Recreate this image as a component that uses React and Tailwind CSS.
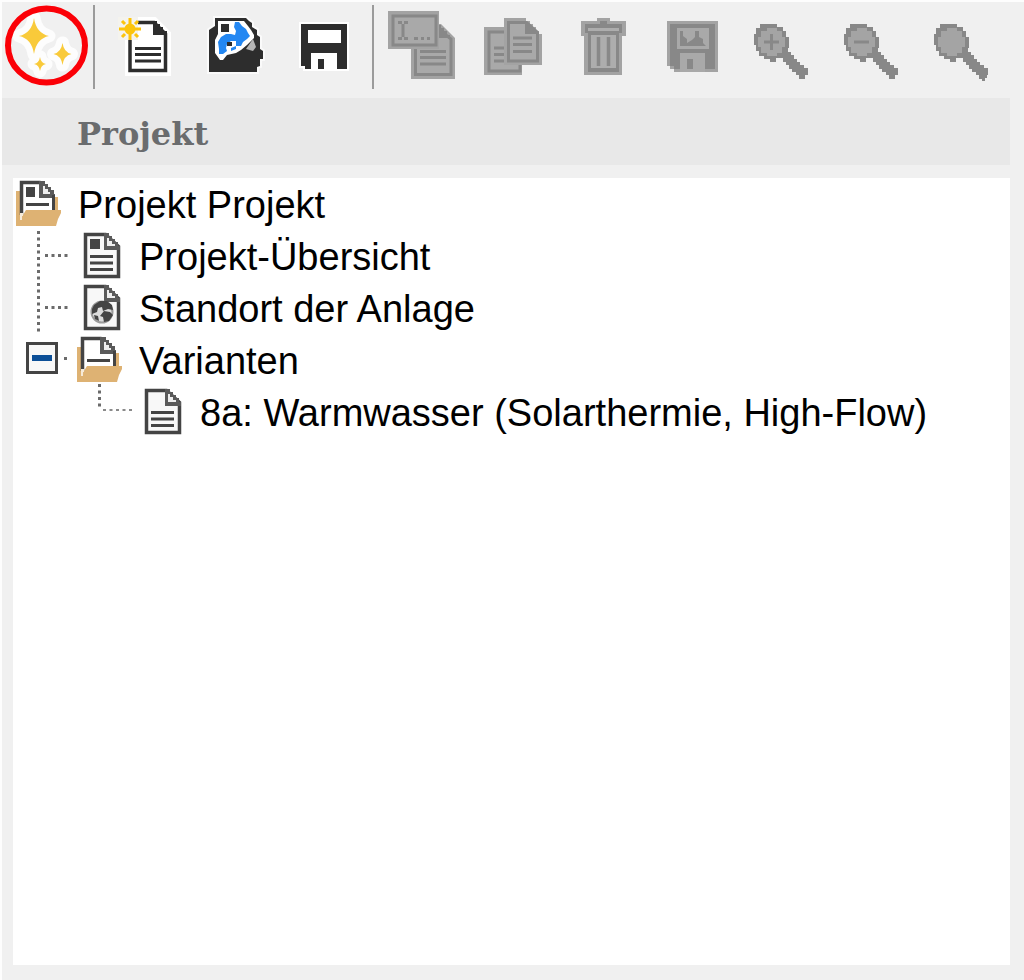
import { useState } from "react";

const DARK = "#2d2d2d";
const LINE = "#444444";
const MID = "#888888";
const PALE = "#a3a3a3";
const FACE = "#a9a9a9";

const spark = (x, y, rx, ry) =>
  `M${x} ${y - ry}Q${x + rx * 0.15} ${y - ry * 0.15} ${x + rx} ${y}Q${x + rx * 0.15} ${y + ry * 0.15} ${x} ${y + ry}Q${x - rx * 0.15} ${y + ry * 0.15} ${x - rx} ${y}Q${x - rx * 0.15} ${y - ry * 0.15} ${x} ${y - ry}Z`;

const SPARKS = [spark(34, 36, 15, 18), spark(62.5, 54, 9, 11), spark(40, 64, 6, 7)];

function SparkleIcon() {
  return (
    <svg className="h-24 w-[90px] shrink-0" viewBox="2 2 90 96" aria-hidden="true">
      <g fill="#fdfdfd" stroke="#fdfdfd" strokeWidth="13" strokeLinejoin="round">
        {SPARKS.map((d) => <path key={d} d={d} />)}
      </g>
      <g fill="#f9ca3a">
        {SPARKS.map((d) => <path key={d} d={d} />)}
      </g>
      <ellipse cx="46.5" cy="45.5" rx="38.5" ry="37" fill="none" stroke="#fb0007" strokeWidth="6" />
    </svg>
  );
}

function ToolIcon({ cx, children }) {
  return (
    <svg className="h-24 w-[76px]" viewBox={`${cx - 38} 2 76 96`} aria-hidden="true">
      {children}
    </svg>
  );
}

function NewIcon() {
  return (
    <ToolIcon cx={147}>
      <path d="M127 19h28l14 14v41h-42z" fill="#fff" stroke="#fff" strokeWidth="4" />
      <path d="M130 22.500h24l11.500 11.500v36.500h-35.500z" fill="#fff" stroke={DARK} strokeWidth="3.500" />
      <path d="M153 21h4v3h3v3h3v4h4v4h-14z" fill={DARK} />
      <path d="M135 48.500h26M135 54.500h26M135 61h26" stroke={DARK} strokeWidth="3" />
      <path d="M118 17h20v23h-20z" fill="#f4f3ee" />
      <circle cx="130" cy="29" r="5.500" fill="#fcc40c" />
      <path d="M130 18v22M119 29h22" stroke="#fcc40c" strokeWidth="3" />
      <path d="M122 21l3 3M135 34l3 3M138 21l-3 3M125 34l-3 3" stroke="#fcc40c" strokeWidth="3" />
    </ToolIcon>
  );
}

function OpenIcon() {
  return (
    <ToolIcon cx={235}>
      <path d="M215 18h31l3 3 3 2v4l5 3v5l3 2v12l3 2v8h-3v7l-3 1v5h-48v-42l3-2 3-2z" fill={DARK} stroke="#fafafa" strokeWidth="4" paintOrder="stroke" />
      <path d="M218 21h26l4 5 3 4 3 5v3l-7 7-6 5-5 3-9 2-4 5h-3l-5-7v-13l3-6z" fill="#fff" />
      <path d="M246 49l7-10 3 8-3 4z" fill="#b4b4b4" />
      <path d="M221 24h8v8h-8z" fill={DARK} />
      <path d="M235 22h4l3 4 4 3 2 4 2 3-3 3-4 3-2 4h-5v-5h-5l-4 3-1 4 1 3-4 3h-4v-5l-1-7 3-5 5-3h5l4 1 1-4-2-4z" fill="#2387f2" />
      <path d="M227 42h5v4h-5z" fill={DARK} />
      <path d="M231 48l5-2v3l-5 2z" fill="#2387f2" />
    </ToolIcon>
  );
}

function SaveIcon() {
  return (
    <ToolIcon cx={323}>
      <path d="M301 24h46v45h-42v-3h-4z" fill={DARK} stroke="#fff" strokeWidth="4" paintOrder="stroke" />
      <path d="M308 30h33v13h-33zM311 53h26v17h-26z" fill="#fff" />
      <path d="M318 59h6v10h-6z" fill={DARK} />
    </ToolIcon>
  );
}

function RenameIcon() {
  return (
    <ToolIcon cx={422}>
      <path d="M411 24h30l3 3 3 3 3 3 3 3 2 2v41h-44z" fill={PALE} />
      <path d="M415.500 30h24l11.500 9v35.500h-35.500z" fill={FACE} stroke={MID} strokeWidth="3" />
      <path d="M439 25h2v3h3v3h3v4h3v3h-11z" fill={MID} />
      <path d="M388 11h51v38h-51z" fill={PALE} />
      <path d="M393 16h43v29h-43z" fill={FACE} stroke={MID} strokeWidth="3" />
      <path d="M403 24v13M398 22.500h4M404 22.500h4M398 38.500h4M404 38.500h4M414 38.500h4M421 38.500h3M427 38.500h3" stroke={MID} strokeWidth="3" />
      <path d="M420 51.500h26M420 57.500h26M420 64h26" stroke={MID} strokeWidth="3" />
    </ToolIcon>
  );
}

function CopyIcon() {
  return (
    <ToolIcon cx={512}>
      <path d="M484 27h38v48h-38z" fill={PALE} />
      <path d="M489 32h31v39h-31z" fill={FACE} stroke={MID} strokeWidth="3" />
      <path d="M494 48h14M494 54.500h14M494 61h14" stroke={MID} strokeWidth="3" />
      <path d="M504 18h22v3h4v3h3v3h3v4h3v3h3v31h-38z" fill={PALE} />
      <path d="M508.500 22.500h18l11 10v28.500h-29z" fill={FACE} stroke={MID} strokeWidth="3" />
      <path d="M525 22h3v3h3v3h3v3h4v3h-13z" fill={MID} />
      <path d="M513 38h19M513 44.500h19M513 51.500h19" stroke={MID} strokeWidth="3" />
    </ToolIcon>
  );
}

function TrashIcon() {
  return (
    <ToolIcon cx={602}>
      <path d="M597 18h13v3h16v15h-4v39h-38v-39h-3v-15h16z" fill={PALE} />
      <path d="M600 21h7v3h15v9h-3v39h-31v-39h-3v-9h15z" fill={MID} />
      <path d="M588 28h31v3h-31zM591 35h25v33h-25z" fill="#adadad" />
      <path d="M598.500 37v29M608.500 37v29" stroke={MID} strokeWidth="3.500" />
    </ToolIcon>
  );
}

function ImageSaveIcon() {
  return (
    <ToolIcon cx={692}>
      <path d="M667 21h51v51h-44v-3h-4v-3h-3z" fill={PALE} />
      <path d="M670 24h45v45h-41v-3h-4z" fill={MID} />
      <path d="M677 28h32v21h-32zM680 53h25v19h-25z" fill={FACE} />
      <path d="M680 31h3v5l4 3v4l5-3 3-3v-6h4v6l4 2v4l3 3h-26z" fill={MID} />
      <path d="M687 59h6v10h-6z" fill={MID} />
    </ToolIcon>
  );
}

function Magnifier({ cx, sign, tip }) {
  const x = cx - 1;
  return (
    <ToolIcon cx={cx}>
      <g transform={`translate(${x - 781} 0)`}>
        <path d="M783 48h5v4h3v3h3v4h3v3h3v3h4v3h4v7h-3v4h-6v-4h-3v-3h-4v-3h-3v-4h-3v-3h-3v-4h-4v-5z" fill={MID} />
        {tip && <path d="M802 75h5v3h-2v3h-3z" fill={MID} />}
        <path d="M767 24h10v3h6v4h3v6h3v11h-3v6h-4v4h-6v4h-6v-3h-6v-3h-5v-5h-3v-6h-2v-11h2v-6h4v-4h7z" fill={MID} />
        <path d="M767 28h10v3h5v6h3v10h-3v6h-5v3h-10v-3h-6v-6h-3v-10h3v-6h6z" fill="#a4a4a4" />
        {sign !== "none" && <path d="M764 42h15" stroke={MID} strokeWidth="3" />}
        {sign === "plus" && <path d="M771.500 34v16" stroke={MID} strokeWidth="3" />}
      </g>
    </ToolIcon>
  );
}

function ToolButton({ label, disabled, children }) {
  return (
    <button
      type="button"
      aria-label={label}
      disabled={disabled}
      className={
        disabled
          ? "flex h-24 w-[90px] shrink-0 items-center justify-center"
          : "flex h-24 w-[88px] shrink-0 items-center justify-center"
      }
    >
      {children}
    </button>
  );
}

/* Tree glyphs share a 64 x 52 box. */
function TreeIcon({ children }) {
  return (
    <svg className="h-[52px] w-16 shrink-0" viewBox="0 0 64 52" aria-hidden="true">
      {children}
    </svg>
  );
}

function Page({ children }) {
  return (
    <>
      <path d="M11.500 3.500h20l13 12v30h-33z" fill="#f8f8f8" stroke={LINE} strokeWidth="3.500" />
      <path d="M30 2h5v3h3v3h3v3h3v4h2v4h-16z" fill="#5a5a5a" />
      <path d="M33 7h2v3h3v3h3v2h-8z" fill="#eee" />
      {children}
    </>
  );
}

function OverviewIcon() {
  return (
    <TreeIcon>
      <Page>
        <path d="M16 8h10v10h-10z" fill={LINE} />
        <path d="M16 25.500h23M16 32h23M16 38.500h23" stroke={LINE} strokeWidth="3" />
      </Page>
    </TreeIcon>
  );
}

function LocationIcon() {
  return (
    <TreeIcon>
      <Page>
        <circle cx="28" cy="29" r="10.500" fill="#dcdcdc" stroke="#9a9a9a" strokeWidth="2" />
        <path d="M20 22l6-4h7l5 4 1 5-5-1-5 2-1-4-4 1-1 4-5 2v-5zM30 28l6 1 3 3-4 6-5 1-1-5-3-1zM20 32l4 1 1 5-4-2z" fill={LINE} />
      </Page>
    </TreeIcon>
  );
}

function DocumentIcon() {
  return (
    <TreeIcon>
      <Page>
        <path d="M16 25.500h23M16 32h23M16 38.500h23" stroke={LINE} strokeWidth="3" />
      </Page>
    </TreeIcon>
  );
}

function FolderIcon({ picture }) {
  return (
    <TreeIcon>
      <path d="M3 12h6v30h-6zM39 18h6v16h-6z" fill="#deb273" />
      <path d="M8.500 36v-32.500h19l11.500 11v20h-30z" fill="#fff" />
      <path d="M8.500 36v-32.500h19" fill="none" stroke={LINE} strokeWidth="3.500" />
      <path d="M26 2h6v3h3v3h3v3h3v4h1v4h-16z" fill="#5a5a5a" />
      <path d="M30 7h2v3h3v3h2v2h-7z" fill="#eee" />
      <path d="M40.500 16v16" fill="none" stroke={LINE} strokeWidth="3" />
      {picture && <path d="M13 8h9v10h-9z" fill={LINE} />}
      <path d="M13 25.500h23" stroke={LINE} strokeWidth="3" />
      <path d="M10 36l3-5h35v3l-3 6-2 7h-40v-5l4-2z" fill="#deb273" />
      <path d="M7 34h3v3h-1v4h-2z" fill="#f6ead8" />
    </TreeIcon>
  );
}

function Branch() {
  return (
    <svg className="h-[52px] w-[61px] shrink-0" viewBox="0 0 61 52" aria-hidden="true">
      <path d="M25.500 0v52" stroke="#6b6b6b" strokeWidth="3" strokeDasharray="3 3.500" />
      <path d="M32 24.500h25" stroke="#6b6b6b" strokeWidth="3" strokeDasharray="3 3.500" />
    </svg>
  );
}

function LastBranch() {
  return (
    <svg className="h-[52px] w-[61px] shrink-0 overflow-visible" viewBox="0 0 61 52" aria-hidden="true">
      <path d="M25.500 -3v24" stroke="#6b6b6b" strokeWidth="3" strokeDasharray="3 3.500" />
      <path d="M29 23h30" stroke="#8a8a8a" strokeWidth="2" strokeDasharray="3 3.500" />
    </svg>
  );
}

function Toggle({ open, onClick }) {
  return (
    <button type="button" aria-label="Varianten" aria-expanded={open} onClick={onClick} className="shrink-0">
      <svg className="h-[52px] w-[61px]" viewBox="0 0 61 52" aria-hidden="true">
        <path d="M14.500 8.500h29v29h-29z" fill="#f8f8f8" stroke={LINE} strokeWidth="3" />
        <path d="M19 20h20v6h-20z" fill="#0c4f97" />
        {!open && <path d="M26 13h6v20h-6z" fill="#0c4f97" />}
        <path d="M51 22h3v3h-3z" fill="#6b6b6b" />
      </svg>
    </button>
  );
}

function Label({ children }) {
  return <span className="pt-px pl-px leading-[51px] whitespace-nowrap">{children}</span>;
}

export default function App() {
  const [open, setOpen] = useState(true);
  return (
    <div className="flex min-h-screen flex-col border-l-2 border-t-2 border-[#fdfdfd] bg-[#f0f0f0]">
      <div role="toolbar" aria-label="Werkzeuge" className="flex h-24 items-start">
        <button type="button" aria-label="Assistent" className="shrink-0">
          <SparkleIcon />
        </button>
        <div className="mt-[3px] ml-px h-[84px] w-[2px] shrink-0 bg-[#9b9b9b]" />
        <div className="ml-2 flex">
          <ToolButton label="Neu"><NewIcon /></ToolButton>
          <ToolButton label="Öffnen"><OpenIcon /></ToolButton>
          <ToolButton label="Speichern"><SaveIcon /></ToolButton>
        </div>
        <div className="mt-[3px] ml-[5px] h-[84px] w-[2px] shrink-0 bg-[#9b9b9b]" />
        <div className="ml-[3px] flex">
          <ToolButton label="Umbenennen" disabled><RenameIcon /></ToolButton>
          <ToolButton label="Kopieren" disabled><CopyIcon /></ToolButton>
          <ToolButton label="Löschen" disabled><TrashIcon /></ToolButton>
          <ToolButton label="Bild speichern" disabled><ImageSaveIcon /></ToolButton>
          <ToolButton label="Vergrößern" disabled><Magnifier cx={782} sign="plus" /></ToolButton>
          <ToolButton label="Verkleinern" disabled><Magnifier cx={872} sign="minus" /></ToolButton>
          <ToolButton label="Zoom" disabled><Magnifier cx={962} sign="none" tip /></ToolButton>
        </div>
      </div>

      <h1 className="mr-[14px] flex h-[67px] items-center bg-[#e8e8e8] pt-1 pl-[75px] font-['DejaVu_Serif',serif] text-[32px] font-bold text-[#6a6c6e]">
        Projekt
      </h1>

      <main className="mt-[13px] mr-[14px] mb-[15px] ml-[11px] flex-1 bg-white pt-px font-['Liberation_Sans',Arial,sans-serif] text-[38px] leading-[52px] text-black">
        <ul>
          <li>
            <div className="flex">
              <FolderIcon picture />
              <Label>Projekt Projekt</Label>
            </div>
            <ul>
              <li className="flex">
                <Branch />
                <OverviewIcon />
                <Label>Projekt-Übersicht</Label>
              </li>
              <li className="flex">
                <Branch />
                <LocationIcon />
                <Label>Standort der Anlage</Label>
              </li>
              <li>
                <div className="flex">
                  <Toggle open={open} onClick={() => setOpen(!open)} />
                  <FolderIcon />
                  <Label>Varianten</Label>
                </div>
                {open && (
                  <ul className="pl-[61px]">
                    <li className="flex">
                      <LastBranch />
                      <DocumentIcon />
                      <Label>8a: Warmwasser (Solarthermie, High-Flow)</Label>
                    </li>
                  </ul>
                )}
              </li>
            </ul>
          </li>
        </ul>
      </main>
    </div>
  );
}
